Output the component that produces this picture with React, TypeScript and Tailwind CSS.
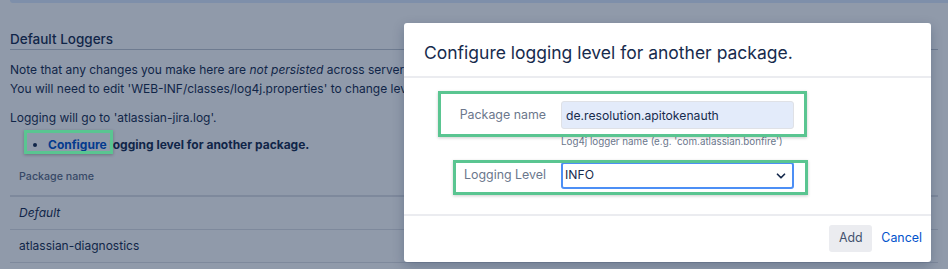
import { ChevronDown } from "lucide-react";

const rows = [
  { name: "Default", italic: true },
  { name: "atlassian-diagnostics", italic: false },
];

export default function App() {
  return (
    <div className="relative h-[269px] w-[948px] overflow-hidden bg-white font-['Inter',sans-serif] text-[#172b4d]">
      {/* page behind the dialog */}
      <div className="ml-[10px] h-[3px] rounded-bl-[3px] bg-[#deebff]" />
      <div className="px-[10px]">
        <h2 className="mt-[26px] border-b border-[#c1c7d0] text-[13.5px] font-medium leading-[20px]">
          Default Loggers
        </h2>
        <p className="mt-[10px] whitespace-nowrap text-[12px] leading-[19px]">
          Note that any changes you make here are <em>not persisted</em> across server restarts.
          <br />
          You will need to edit 'WEB-INF/classes/log4j.properties' to change levels permanently.
        </p>
        <p className="mt-[10px] text-[12px] leading-[19px]">Logging will go to 'atlassian-jira.log'.</p>
        <ul className="mt-[8px] list-disc pl-[38px] text-[12px] font-bold leading-[19px]">
          <li>
            <a className="text-[#0052cc]">Configure</a> logging level for another package.
          </li>
        </ul>
        <div className="mt-[6px] text-[12px]">
          <div className="flex h-[37px] items-center border-b-2 border-[#dfe1e6] pl-[9px] text-[10.7px] font-medium text-[#5e6c84]">
            Package name
          </div>
          {rows.map((r) => (
            <div
              key={r.name}
              className={`flex h-[33px] items-center border-b border-[#dfe1e6] pl-[9px] ${r.italic ? "italic" : ""}`}
            >
              {r.name}
            </div>
          ))}
        </div>
      </div>

      {/* blanket */}
      <div className="absolute inset-0 bg-[rgba(9,30,66,0.45)]" />

      {/* annotation around the link */}
      <div className="absolute left-[24px] top-[130px] h-[24px] w-[89px] border-[3px] border-[#5ac591] shadow-[0_1px_3px_rgba(0,0,0,0.25)]" />

      {/* dialog */}
      <div className="absolute left-[404px] top-[23px] flex h-[239px] w-[527px] flex-col rounded-[3px] bg-white shadow-[0_4px_12px_rgba(9,30,66,0.25)]">
        <div className="h-[55px] border-b-2 border-[#ebecf0] px-[20px] pt-[18px]">
          <h1 className="text-[17.5px] font-normal leading-[24px]">Configure logging level for another package.</h1>
        </div>

        <div className="relative flex-1 pt-[23px]">
          <div className="flex items-center">
            <label className="w-[142px] text-right text-[12.4px] text-[#6b778c]">Package name</label>
            <input
              readOnly
              value="de.resolution.apitokenauth"
              className="ml-[15px] h-[28px] w-[233px] rounded-[3px] border border-[#dfe1e6] bg-[#e3ebfa] px-[4px] text-[12.2px] text-[#172b4d] outline-none"
            />
          </div>
          <div className="ml-[157px] mt-[5px] text-[9.8px] leading-[16px] text-[#6b778c]">
            Log4j logger name (e.g. 'com.atlassian.bonfire')
          </div>
          <div className="mt-[12px] flex items-center">
            <label className="w-[142px] text-right text-[12.4px] text-[#6b778c]">Logging Level</label>
            <div className="ml-[15px] flex h-[27px] w-[233px] items-center justify-between rounded-[3px] border-2 border-[#4c8ff5] bg-white pl-[2px] pr-[4px] text-[12.2px]">
              <span>INFO</span>
              <ChevronDown className="h-[14px] w-[14px] text-[#172b4d]" strokeWidth={3} />
            </div>
          </div>

          {/* annotations */}
          <div className="absolute left-[34px] top-[13px] h-[46px] w-[369px] border-[3px] border-[#5ac591] shadow-[0_1px_3px_rgba(0,0,0,0.2)]" />
          <div className="absolute left-[49px] top-[82px] h-[35px] w-[355px] border-[3px] border-[#5ac591] shadow-[0_1px_3px_rgba(0,0,0,0.2)]" />
        </div>

        <div className="flex h-[48px] items-start justify-end gap-[9px] border-t-2 border-[#ebecf0] pr-[9px] pt-[9px] text-[12.4px]">
          <button className="h-[27px] w-[43px] rounded-[3px] bg-[#ebecf0] text-[#42526e]">Add</button>
          <button className="h-[27px] text-[#0052cc]">Cancel</button>
        </div>
      </div>
    </div>
  );
}
